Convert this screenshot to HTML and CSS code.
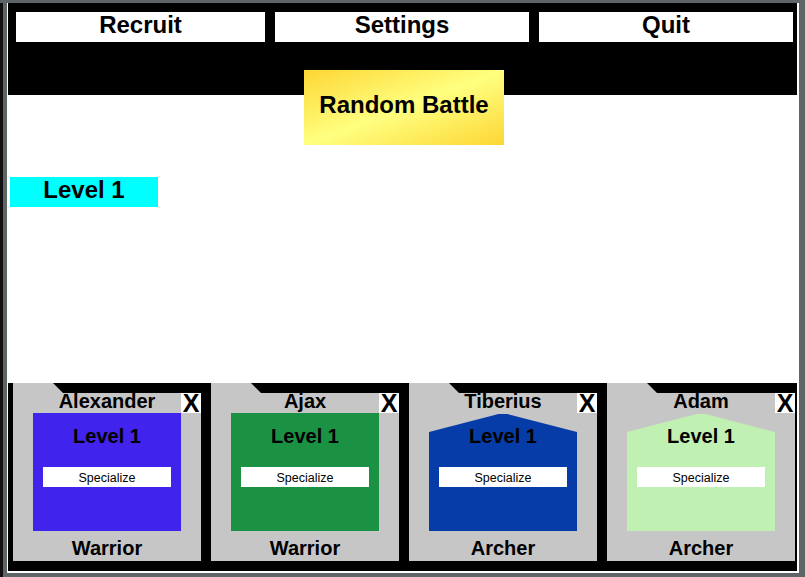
FILE: index.html
```html
<!DOCTYPE html>
<html>
<head>
<meta charset="utf-8">
<title>Army</title>
<link rel="stylesheet" href="styles.css">
</head>
<body>
<div class="window">
  <header class="topbar">
    <button class="menu-btn recruit">Recruit</button>
    <button class="menu-btn">Settings</button>
    <button class="menu-btn">Quit</button>
  </header>
  <main class="field">
    <button class="battle-btn">Random Battle</button>
    <div class="level-tag">Level 1</div>
  </main>
  <section class="roster">
    <div class="card">
      <div class="notch"></div>
      <div class="card-name">Alexander</div>
      <div class="close">X</div>
      <div class="panel warrior-blue">
        <div class="panel-level">Level 1</div>
        <button class="spec-btn">Specialize</button>
      </div>
      <div class="card-class">Warrior</div>
    </div>
    <div class="card">
      <div class="notch"></div>
      <div class="card-name">Ajax</div>
      <div class="close">X</div>
      <div class="panel warrior-green">
        <div class="panel-level">Level 1</div>
        <button class="spec-btn">Specialize</button>
      </div>
      <div class="card-class">Warrior</div>
    </div>
    <div class="card">
      <div class="notch"></div>
      <div class="card-name">Tiberius</div>
      <div class="close">X</div>
      <div class="panel archer archer-blue">
        <div class="panel-level">Level 1</div>
        <button class="spec-btn">Specialize</button>
      </div>
      <div class="card-class">Archer</div>
    </div>
    <div class="card">
      <div class="notch"></div>
      <div class="card-name">Adam</div>
      <div class="close">X</div>
      <div class="panel archer archer-green">
        <div class="panel-level">Level 1</div>
        <button class="spec-btn">Specialize</button>
      </div>
      <div class="card-class">Archer</div>
    </div>
  </section>
</div>
</body>
</html>
```

FILE: styles.css
```css
* { box-sizing: border-box; }

html, body {
  margin: 0;
  padding: 0;
}

body {
  width: 805px;
  height: 577px;
  overflow: hidden;
  background:
    linear-gradient(#5e6566, #5e6566) top left / 100% 3px no-repeat,
    linear-gradient(to right, #111111 0, #111111 3px, #5e6566 3px, #5e6566 100%);
  font-family: "Liberation Sans", Arial, sans-serif;
  color: #000;
  padding-top: 3px;
  padding-left: 7px;
}

button {
  font-family: "Liberation Sans", Arial, sans-serif;
  border: none;
  padding: 0;
  margin: 0;
  color: #000;
  cursor: pointer;
}

.window {
  width: 792px;
  height: 570px;
  border-left: 1px solid #ffffff;
  border-right: 2px solid #ffffff;
  border-bottom: 2px solid #ffffff;
  display: flex;
  flex-direction: column;
  background: #ffffff;
}

/* top menu bar */
.topbar {
  height: 92px;
  flex: none;
  background: #000;
  display: flex;
  gap: 10px;
  padding: 9px 4px 0 8px;
  align-items: flex-start;
}

.menu-btn {
  width: 254px;
  height: 30px;
  padding: 0 0 5px 0;
  background: #fff;
  font-size: 24px;
  font-weight: bold;
  line-height: 25px;
  text-align: center;
}

.menu-btn.recruit { width: 249px; }

/* white field */
.field {
  height: 288px;
  flex: none;
  background: #fff;
  display: flex;
  flex-direction: column;
  align-items: flex-start;
}

.battle-btn {
  position: relative;
  z-index: 1;
  margin-top: -25px;
  margin-left: 296px;
  width: 200px;
  height: 75px;
  padding: 23px 0 28px 0;
  font-size: 24px;
  font-weight: bold;
  line-height: 24px;
  text-align: center;
  display: block;
  background: linear-gradient(to bottom right, #fdd634 0%, #ffff80 50%, #fdd634 100%);
}

.level-tag {
  margin-top: 32px;
  margin-left: 2px;
  width: 148px;
  height: 30px;
  background: #00ffff;
  font-size: 24px;
  font-weight: bold;
  line-height: 24px;
  padding-top: 1px;
  text-align: center;
}

/* roster at bottom */
.roster {
  flex: 1;
  background: #000;
  display: flex;
  gap: 10px;
  padding: 0 2px 10px 5px;
}

.card {
  position: relative;
  width: 188px;
  height: 178px;
  background: #c6c6c6;
  display: flex;
  flex-direction: column;
}

.notch {
  position: absolute;
  left: 40px;
  right: 0;
  top: 0;
  height: 10px;
  background: #000;
  clip-path: polygon(0 0, 100% 0, 100% 100%, 10px 100%);
}

.card-name {
  position: relative;
  height: 30px;
  padding-top: 8px;
  font-size: 20px;
  font-weight: bold;
  line-height: 21px;
  text-align: center;
}

.close {
  position: absolute;
  top: 10px;
  right: 0;
  width: 20px;
  height: 20px;
  background: #fff;
  font-size: 25px;
  font-weight: bold;
  line-height: 20px;
  text-align: center;
}

.panel {
  margin: 0 20px;
  height: 118px;
  padding-top: 11px;
  display: flex;
  flex-direction: column;
  align-items: center;
}

.panel-level {
  font-size: 20px;
  font-weight: bold;
  line-height: 24px;
  height: 24px;
}

.spec-btn {
  margin-top: 19px;
  width: 128px;
  height: 20px;
  padding: 2px 0 0 0;
  background: #fff;
  font-size: 12.5px;
  line-height: 18px;
  text-align: center;
}

.warrior-blue { background: #4023ec; }
.warrior-green { background: #1b9143; }
.archer-blue { background: #063ca7; }
.archer-green { background: #c0f0b2; }

.archer {
  clip-path: polygon(0 19px, 47% 1px, 53% 1px, 100% 19px, 100% 100%, 0 100%);
}

.card-class {
  height: 30px;
  padding-top: 4px;
  font-size: 20px;
  font-weight: bold;
  line-height: 26px;
  text-align: center;
}
```
